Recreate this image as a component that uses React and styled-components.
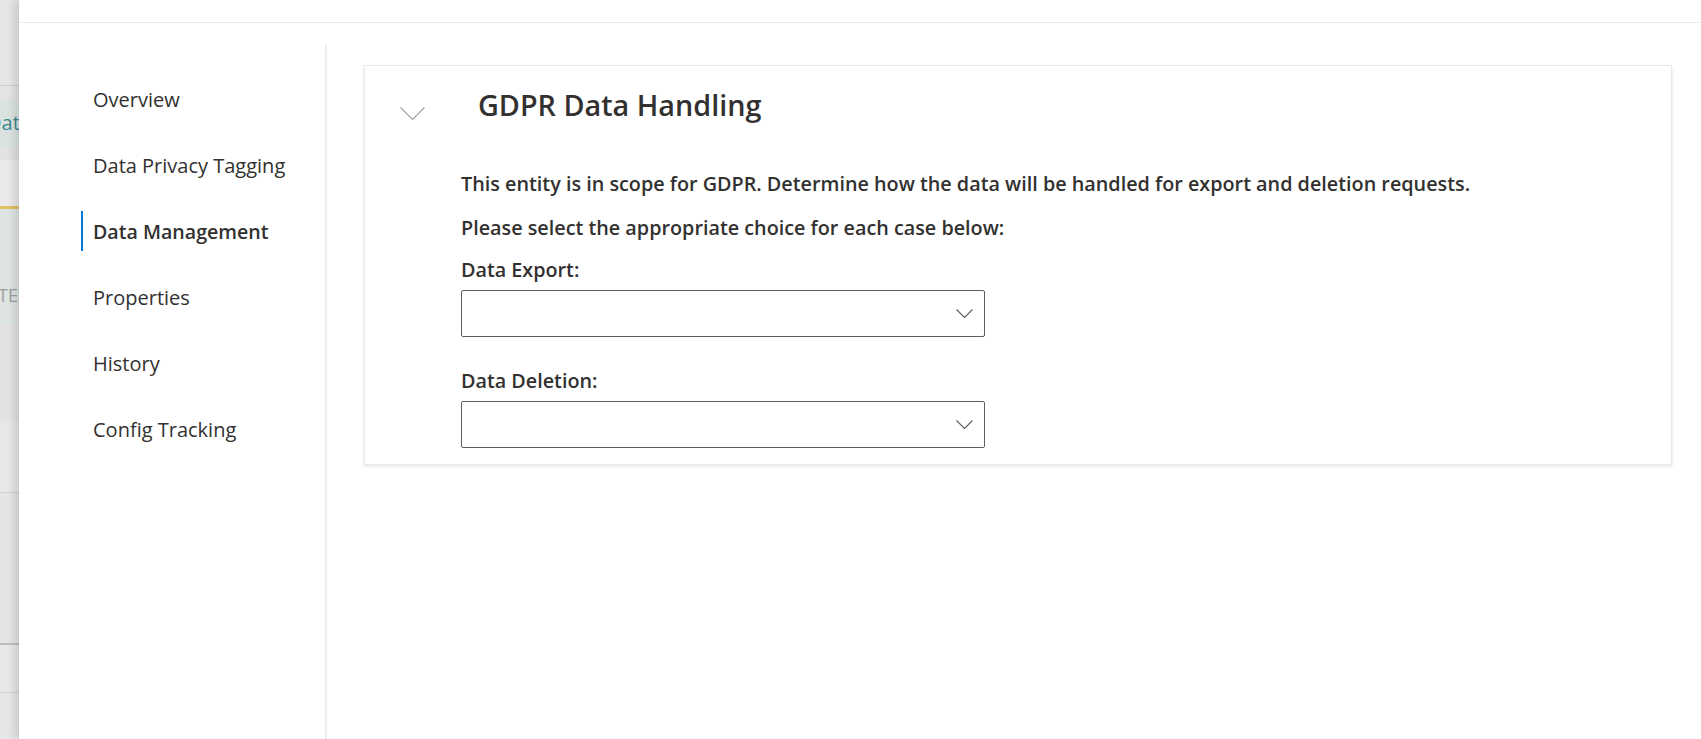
import React from "react";
import styled, { createGlobalStyle } from "styled-components";

const GlobalStyle = createGlobalStyle`
    html, body {
        margin: 0;
        padding: 0;
        background: #ffffff;
        overflow: hidden;
    }
    body {
        font-family: "Open Sans", "Noto Sans", Arial, sans-serif;
        color: #323130;
    }
    * {
        box-sizing: border-box;
    }
`;

const navItems = [
    "Overview",
    "Data Privacy Tagging",
    "Data Management",
    "Properties",
    "History",
    "Config Tracking",
];

// page that sits behind the side panel, only a sliver shows
const backdropBlocks = [
    { h: 86, bg: "#e6e6e6", line: "1px solid #cfcfcf" },
    { h: 13, bg: "#e5e5e5" },
    { h: 48, bg: "#dbe3e1", text: "Data", color: "#3f8a90", top: 10, left: -13, size: 20 },
    { h: 13, bg: "#e2e2e2" },
    { h: 46, bg: "#eaeaea" },
    { h: 3, bg: "#e2c162" },
    { h: 116, bg: "#dfe5e3", text: "TEN", color: "#9d9d9d", top: 72, left: -2, size: 18 },
    { h: 96, bg: "#e3e3e3" },
    { h: 72, bg: "#e8e8e8", line: "1px solid #cfcfcf" },
    { h: 152, bg: "#e5e5e5", line: "2px solid #b9bfc5" },
    { h: 48, bg: "#e8e8e8", line: "1px solid #cfcfcf" },
];

const Chevron = ({ w, h, color }) => (
    <svg viewBox={`0 0 ${w} ${h}`} width={w} height={h}>
        <path d={`M0.5 0.5 L${w / 2} ${h - 0.5} L${w - 0.5} 0.5`} fill="none" stroke={color} strokeWidth="1.1" />
    </svg>
);

const App = () => {
    return (
        <>
            <GlobalStyle />
            <Screen>
                <Backdrop>
                    {backdropBlocks.map((b, i) => (
                        <BackdropBlock key={i} $h={b.h} $bg={b.bg} $line={b.line}>
                            {b.text && (
                                <BackdropText $color={b.color} $top={b.top} $left={b.left} $size={b.size}>
                                    {b.text}
                                </BackdropText>
                            )}
                        </BackdropBlock>
                    ))}
                    <BackdropFill />
                </Backdrop>
                <Panel>
                    <PanelTop />
                    <PanelBody>
                        <SideNav>
                            {navItems.map((item) => (
                                <NavItem key={item} $active={item === "Data Management"}>
                                    {item}
                                </NavItem>
                            ))}
                        </SideNav>
                        <Content>
                            <Card>
                                <CardHeader>
                                    <Collapse>
                                        <Chevron w={25} h={13} color="#a19f9d" />
                                    </Collapse>
                                    <CardTitle>GDPR Data Handling</CardTitle>
                                </CardHeader>
                                <CardBody>
                                    <Text>
                                        This entity is in scope for GDPR. Determine how the data will be handled for export and deletion requests.
                                    </Text>
                                    <Text>Please select the appropriate choice for each case below:</Text>
                                    <Field>
                                        <FieldLabel>Data Export:</FieldLabel>
                                        <Dropdown>
                                            <Chevron w={17} h={9} color="#605e5c" />
                                        </Dropdown>
                                    </Field>
                                    <Field $gap="32px">
                                        <FieldLabel>Data Deletion:</FieldLabel>
                                        <Dropdown>
                                            <Chevron w={17} h={9} color="#605e5c" />
                                        </Dropdown>
                                    </Field>
                                </CardBody>
                            </Card>
                        </Content>
                    </PanelBody>
                </Panel>
            </Screen>
        </>
    );
};

const Screen = styled.div`
    display: flex;
    width: 100vw;
    height: 100vh;
    overflow: hidden;
`;

const Backdrop = styled.div`
    width: 19px;
    flex-shrink: 0;
    display: flex;
    flex-direction: column;
    overflow: hidden;
    background: #e6e6e6;
`;

const BackdropBlock = styled.div`
    flex-shrink: 0;
    height: ${(p) => p.$h}px;
    background: ${(p) => p.$bg};
    border-bottom: ${(p) => p.$line || "none"};
    overflow: hidden;
`;

const BackdropText = styled.div`
    margin-top: ${(p) => p.$top}px;
    margin-left: ${(p) => p.$left}px;
    font-size: ${(p) => p.$size}px;
    line-height: 28px;
    color: ${(p) => p.$color};
    white-space: nowrap;
`;

const BackdropFill = styled.div`
    flex: 1;
    background: #e7e7e7;
`;

const Panel = styled.div`
    flex: 1;
    position: relative;
    z-index: 1;
    display: flex;
    flex-direction: column;
    background: #ffffff;
    box-shadow: -4px 0 9px rgba(0, 0, 0, 0.14);
`;

const PanelTop = styled.div`
    height: 23px;
    flex-shrink: 0;
    border-bottom: 1px solid #ebebeb;
`;

const PanelBody = styled.div`
    flex: 1;
    display: flex;
    padding-top: 22px;
`;

const SideNav = styled.nav`
    width: 308px;
    flex-shrink: 0;
    border-right: 2px solid #eeeeee;
    padding-top: 34px;
    display: flex;
    flex-direction: column;
    gap: 26px;
`;

const NavItem = styled.div`
    height: 40px;
    margin-left: 62px;
    padding-left: 10px;
    display: flex;
    align-items: center;
    border-left: 2px solid ${(p) => (p.$active ? "#0078d4" : "transparent")};
    font-size: ${(p) => (p.$active ? "19.6px" : "20px")};
    font-weight: ${(p) => (p.$active ? 600 : 400)};
    color: #323130;
    white-space: nowrap;
`;

const Content = styled.main`
    flex: 1;
    padding: 20px 29px 0 37px;
`;

const Card = styled.section`
    background: #ffffff;
    border: 1px solid #e9e9e9;
    box-shadow: 0 1.6px 3.6px rgba(0, 0, 0, 0.1), 0 0.3px 0.9px rgba(0, 0, 0, 0.08);
`;

const CardHeader = styled.header`
    display: flex;
    align-items: flex-start;
    padding: 19px 0 0 35px;
`;

const Collapse = styled.div`
    flex-shrink: 0;
    display: flex;
    margin-top: 22px;
`;

const CardTitle = styled.h2`
    margin: 0 0 0 53px;
    font-size: 28.75px;
    line-height: 40px;
    font-weight: 600;
    color: #323130;
`;

const CardBody = styled.div`
    padding: 45px 0 16px 96px;
`;

const Text = styled.p`
    margin: 0 0 16px;
    font-size: 19.8px;
    line-height: 28px;
    font-weight: 600;
    color: #323130;
`;

const Field = styled.div`
    margin-top: ${(p) => p.$gap || "0px"};
`;

const FieldLabel = styled.label`
    display: block;
    font-size: 19.75px;
    line-height: 24px;
    font-weight: 600;
    color: #323130;
    margin-bottom: 8px;
`;

const Dropdown = styled.div`
    width: 524px;
    height: 47px;
    border: 1px solid #605e5c;
    border-radius: 2px;
    display: flex;
    align-items: center;
    justify-content: flex-end;
    padding-right: 11px;
`;

export default App;
